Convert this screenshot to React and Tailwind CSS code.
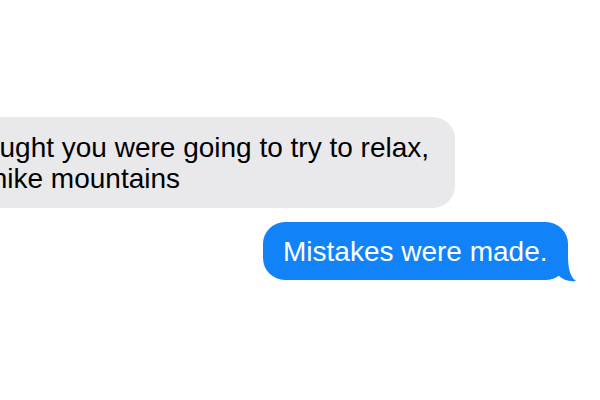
export default function App() {
  return (
    <div
      className="w-[600px] h-[400px] bg-white overflow-hidden flex flex-col pt-[117px]"
      style={{ fontFamily: '"Liberation Sans", Arial, sans-serif' }}
    >
      <div className="ml-[-75px] w-[530px] shrink-0 rounded-[22px] bg-[#e9e9eb] pl-[20px] pt-[15px] pb-[14px] text-[28px] leading-[31px] text-black whitespace-nowrap">
        I thought you were going to try to relax,
        <br />
        not hike mountains
      </div>
      <div className="relative mt-[14px] ml-[263px] w-[305px] h-[58px] shrink-0 rounded-[22px] bg-[#1282f9] pl-[20px] pt-[14px] text-[28px] leading-[31px] text-white whitespace-nowrap">
        Mistakes were made.
        <svg
          className="absolute right-[-8px] bottom-[-2px]"
          width="24"
          height="28"
          viewBox="0 0 24 28"
        >
          <path
            d="M16 0 C16 12 17 22 24 27 C17 28 11 26 6 21 C4 23 2 24 0 25 L0 0 Z"
            fill="#1282f9"
          />
        </svg>
      </div>
    </div>
  );
}
